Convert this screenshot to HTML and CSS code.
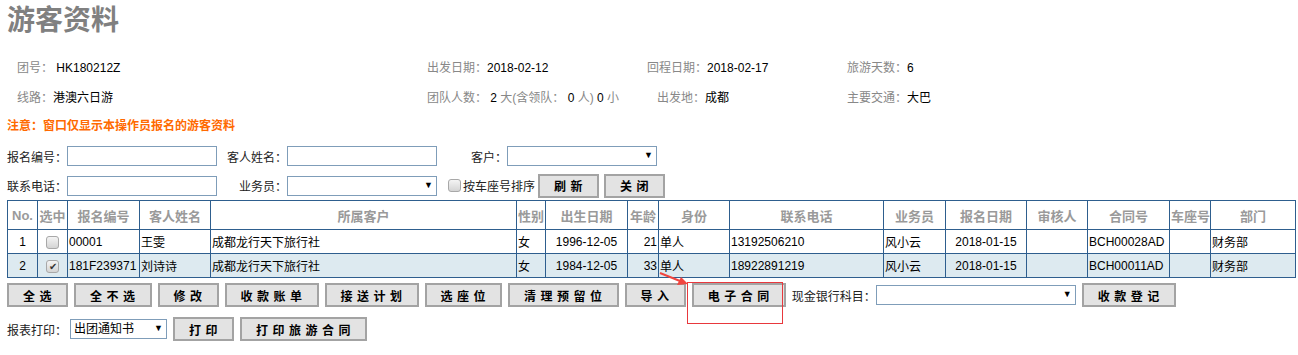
FILE: index.html
```html
<!DOCTYPE html>
<html lang="zh-CN">
<head>
  <meta charset="UTF-8">
  <title>游客资料</title>
  <link rel="stylesheet" href="styles.css">
</head>
<body>
  <h1 class="title">游客资料</h1>

  <div class="info">
    <div class="info-row">
      <span><em>团号：</em> HK180212Z</span>
      <span><em>出发日期：</em>2018-02-12</span>
      <span><em>回程日期：</em>2018-02-17</span>
      <span><em>旅游天数：</em>6</span>
    </div>
    <div class="info-row">
      <span><em>线路：</em>港澳六日游</span>
      <span><em>团队人数：</em> 2 <em>大(含领队：</em> 0 <em>人)</em> 0 <em>小</em></span>
      <span class="shift"><em>出发地：</em>成都</span>
      <span><em>主要交通：</em>大巴</span>
    </div>
  </div>

  <p class="notice">注意：窗口仅显示本操作员报名的游客资料</p>

  <div class="form-row">
    <label class="lbl">报名编号：</label>
    <input type="text" class="txt">
    <label class="lbl lbl-r">客人姓名：</label>
    <input type="text" class="txt">
    <label class="lbl lbl-r">客户：</label>
    <span class="sel w150"><select></select></span>
  </div>
  <div class="form-row row2">
    <label class="lbl">联系电话：</label>
    <input type="text" class="txt">
    <label class="lbl lbl-r">业务员：</label>
    <span class="sel w150"><select></select></span>
    <span class="chk"></span>
    <span class="chk-text">按车座号排序</span>
    <button class="btn">刷新</button>
    <button class="btn">关闭</button>
  </div>

  <table class="grid">
    <colgroup>
      <col style="width:30px"><col style="width:30px"><col style="width:72px"><col style="width:71px">
      <col style="width:306px"><col style="width:29px"><col style="width:82px"><col style="width:31px">
      <col style="width:71px"><col style="width:154px"><col style="width:62px"><col style="width:81px">
      <col style="width:61px"><col style="width:82px"><col style="width:41px"><col style="width:85px">
    </colgroup>
    <thead>
      <tr>
        <th>No.</th><th>选中</th><th>报名编号</th><th>客人姓名</th><th>所属客户</th><th>性别</th>
        <th>出生日期</th><th>年龄</th><th>身份</th><th>联系电话</th><th>业务员</th><th>报名日期</th>
        <th>审核人</th><th>合同号</th><th>车座号</th><th>部门</th>
      </tr>
    </thead>
    <tbody>
      <tr>
        <td class="c">1</td><td class="c"><span class="chk"></span></td><td>00001</td><td>王雯</td>
        <td>成都龙行天下旅行社</td><td>女</td><td class="c">1996-12-05</td><td class="r">21</td>
        <td>单人</td><td>13192506210</td><td>风小云</td><td class="c">2018-01-15</td>
        <td></td><td>BCH00028AD</td><td></td><td>财务部</td>
      </tr>
      <tr class="alt">
        <td class="c">2</td><td class="c"><span class="chk on">&#10004;</span></td><td>181F239371</td><td>刘诗诗</td>
        <td>成都龙行天下旅行社</td><td>女</td><td class="c">1984-12-05</td><td class="r">33</td>
        <td>单人</td><td>18922891219</td><td>风小云</td><td class="c">2018-01-15</td>
        <td></td><td>BCH00011AD</td><td></td><td>财务部</td>
      </tr>
    </tbody>
  </table>

  <div class="actions">
    <button class="btn">全选</button>
    <button class="btn">全不选</button>
    <button class="btn">修改</button>
    <button class="btn">收款账单</button>
    <button class="btn">接送计划</button>
    <button class="btn">选座位</button>
    <button class="btn">清理预留位</button>
    <button class="btn">导入</button>
    <button class="btn">电子合同</button>
    <label class="lbl-cash">现金银行科目：</label>
    <span class="sel w200"><select></select></span>
    <button class="btn">收款登记</button>
  </div>

  <div class="actions print">
    <label>报表打印：</label>
    <span class="sel w97"><select><option>出团通知书</option></select></span>
    <button class="btn">打印</button>
    <button class="btn">打印旅游合同</button>
  </div>

  <!-- red annotation over the contract button -->
  <div class="mark"></div>
  <svg class="arrow" width="36" height="22" viewBox="0 0 36 22">
    <line x1="4" y1="5" x2="24" y2="13" stroke="#f0453f" stroke-width="2"/>
    <polygon points="32,16 21,17 25,9" fill="#f0453f"/>
  </svg>
</body>
</html>
```

FILE: styles.css
```css
body {
  margin: 0;
  font-family: "Liberation Sans", "Noto Sans CJK SC", sans-serif;
  font-size: 12px;
  color: #000;
  position: relative;
}

.title {
  margin: 0;
  padding-left: 7px;
  height: 42px;
  line-height: 42px;
  font-size: 28px;
  font-weight: bold;
  color: #808080;
}

.info {
  margin-top: 9px;
  padding-left: 17px;
}

.info-row {
  display: grid;
  grid-template-columns: 410px 220px 200px 1fr;
  height: 30px;
  align-items: center;
}

.info-row em {
  font-style: normal;
  color: #888;
}

.info-row .shift {
  padding-left: 10px;
}

.notice {
  margin: 0;
  padding-left: 7px;
  height: 30px;
  line-height: 30px;
  color: #ff6a00;
  font-weight: bold;
}

.form-row {
  display: flex;
  align-items: center;
  height: 30px;
  padding-left: 7px;
}

.form-row.row2 {
  height: 29px;
}

.lbl {
  width: 60px;
  color: #222;
}

.lbl-r {
  width: 70px;
  text-align: right;
}

.txt {
  box-sizing: border-box;
  width: 150px;
  height: 20px;
  margin: 0;
  border: 1px solid #7f9db9;
  padding: 0 2px;
}

.sel {
  display: inline-block;
  position: relative;
  box-sizing: border-box;
  height: 20px;
  border: 1px solid #7f9db9;
  background: #fff;
}

.sel select {
  appearance: none;
  width: 100%;
  height: 18px;
  border: none;
  background: transparent;
  font: inherit;
  padding: 0 3px;
  outline: none;
}

.sel::after {
  content: "\25BC";
  position: absolute;
  right: 3px;
  top: 3px;
  font-size: 9px;
  color: #000;
}

.w150 { width: 150px; }
.w200 { width: 200px; }
.w97 { width: 97px; }

.chk {
  display: inline-block;
  box-sizing: border-box;
  width: 13px;
  height: 13px;
  border: 1px solid #a8a8a8;
  border-radius: 3px;
  background: linear-gradient(#f4f4f4, #d4d4d4);
  vertical-align: middle;
  font-size: 10px;
  line-height: 11px;
  text-align: center;
  color: #333;
}

.form-row .chk {
  margin-left: 11px;
}

.chk-text {
  margin-left: 2px;
  margin-right: 3px;
  color: #222;
}

.btn {
  box-sizing: border-box;
  height: 24px;
  margin: 0;
  padding: 0 10px 0 14px;
  border: 2px solid #a3a3a3;
  background: #e3e3e3;
  font-family: inherit;
  font-size: 12px;
  font-weight: bold;
  letter-spacing: 4.5px;
  color: #000;
  cursor: pointer;
}

.row2 .btn + .btn {
  margin-left: 5px;
}

.grid {
  margin-left: 7px;
  width: 1288px;
  border-collapse: collapse;
  table-layout: fixed;
}

.grid th,
.grid td {
  border: 1px solid #2e5e8e;
  padding: 0 1px;
  white-space: nowrap;
  overflow: hidden;
}

.grid th {
  height: 28px;
  color: #9a9a9a;
  font-weight: bold;
  font-size: 13px;
  text-align: center;
}

.grid td {
  height: 23px;
  text-align: left;
}

.grid td.c { text-align: center; }
.grid td.r { text-align: right; }

.grid tr.alt td {
  background: #ddeaf0;
}

.actions {
  display: flex;
  align-items: center;
  gap: 6px;
  padding: 5px 0 0 7px;
}

.lbl-cash {
  margin-right: -6px;
  color: #222;
}

.actions.print {
  padding-top: 10px;
}

.print label {
  margin-right: -3px;
  color: #222;
}

.mark {
  position: absolute;
  left: 687px;
  top: 282px;
  width: 94px;
  height: 40px;
  border: 1px solid #e8383d;
}

.arrow {
  position: absolute;
  left: 656px;
  top: 268px;
}
```
